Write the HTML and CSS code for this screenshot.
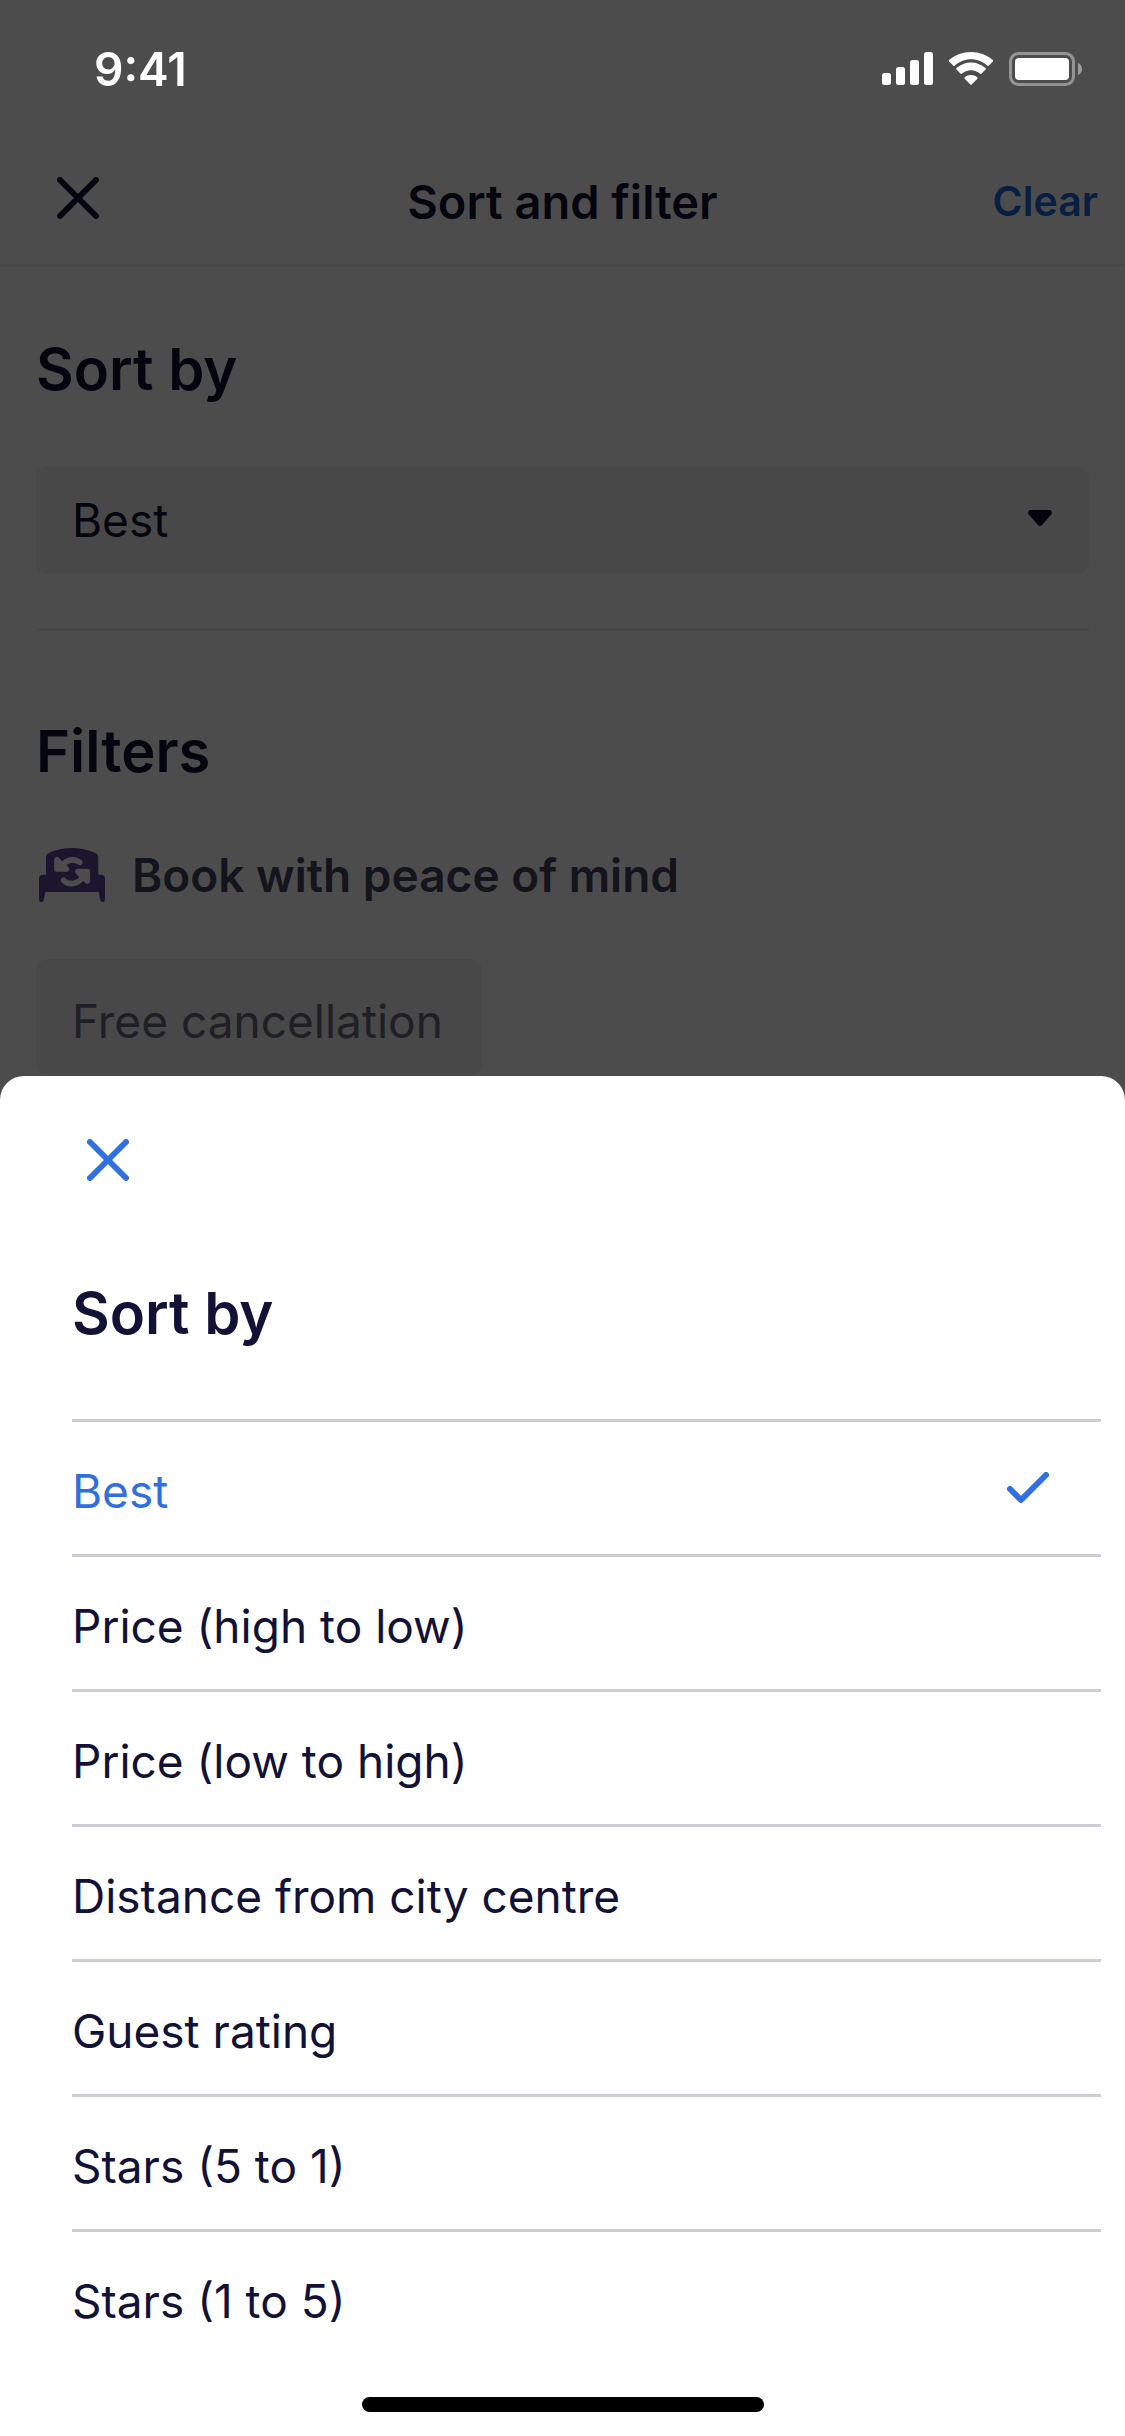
FILE: index.html
```html
<!DOCTYPE html>
<html lang="en">
<head>
    <meta charset="UTF-8">
    <meta name="viewport" content="width=device-width, initial-scale=1.0">
    <title>Sort and filter</title>
    <link rel="stylesheet" href="styles.css">
</head>
<body>
    <!-- Status bar -->
    <div class="status-bar">
        <span class="time">9:41</span>
        <div class="status-icons">
            <svg width="51" height="34" viewBox="0 0 51 34" fill="#fff">
                <rect x="0" y="21" width="9" height="12" rx="2.5"/>
                <rect x="14" y="15" width="9" height="18" rx="2.5"/>
                <rect x="28" y="8" width="9" height="25" rx="2.5"/>
                <rect x="42" y="0" width="9" height="33" rx="2.5"/>
            </svg>
            <svg width="46" height="34" viewBox="0 0 46 34" fill="#fff">
                <path d="M23 7.2c6.300 0 12 2.400 16.400 6.500.4.300.9.300 1.200 0l4.300-4.300c.3-.3.3-.9 0-1.300C32.700-2.700 13.300-2.700 1.100 8.100c-.4.400-.4 1 0 1.300l4.300 4.300c.3.300.8.300 1.200 0C11 9.600 16.700 7.200 23 7.200z"/>
                <path d="M23 18.200c3.400 0 6.600 1.300 9.100 3.600.4.300.9.300 1.200 0l4.300-4.400c.4-.4.3-.9 0-1.300-8.300-7.600-20.900-7.600-29.200 0-.3.400-.4.900 0 1.300l4.300 4.400c.3.300.8.300 1.200 0 2.500-2.300 5.700-3.600 9.100-3.600z"/>
                <path d="M29.400 26.700c.4-.4.400-1 0-1.300-3.700-3.100-9.100-3.100-12.800 0-.4.300-.4.900 0 1.300l5.800 5.900c.3.400.9.400 1.200 0z"/>
            </svg>
            <svg width="73" height="34" viewBox="0 0 73 34">
                <rect x="1.500" y="1.500" width="63" height="31" rx="8" fill="none" stroke="#fff" stroke-opacity=".4" stroke-width="3"/>
                <rect x="6" y="6" width="54" height="22" rx="4" fill="#fff"/>
                <path d="M69 11v12c2.500-1 4-3.300 4-6s-1.500-5-4-6z" fill="#fff" fill-opacity=".45"/>
            </svg>
        </div>
    </div>

    <header class="nav">
        <button type="button" class="icon-btn" aria-label="Close">
            <svg width="42" height="42" viewBox="0 0 42 42" fill="none" stroke="currentColor" stroke-width="6" stroke-linecap="round"><path d="M3 3l36 36M39 3L3 39"/></svg>
        </button>
        <h1 class="nav-title">Sort and filter</h1>
        <button type="button" class="clear-btn">Clear</button>
    </header>

    <main class="page">
        <section class="sort-section">
            <h2 class="heading"><label for="sort">Sort by</label></h2>
            <div class="select-wrap">
                <select class="select" id="sort">
                    <option selected>Best</option>
                    <option>Price (high to low)</option>
                    <option>Price (low to high)</option>
                    <option>Distance from city centre</option>
                    <option>Guest rating</option>
                    <option>Stars (5 to 1)</option>
                    <option>Stars (1 to 5)</option>
                </select>
                <svg class="caret" width="24" height="16" viewBox="0 0 24 16" fill="currentColor"><path d="M3 0h18c2.500 0 3.800 2.800 2.200 4.600L14 15c-1.100 1.300-2.900 1.300-4 0L.8 4.600C-.8 2.800.5 0 3 0z"/></svg>
            </div>
        </section>

        <section class="filter-section">
            <h2 class="heading">Filters</h2>
            <h3 class="subheading">
                <svg width="66" height="54" viewBox="57 54 198 162">
                    <path fill="#5c479c" d="M78 82q0-9 8-13 69-30 141 0 8 4 8 13v52h8q12 0 12 12v61q0 9-7 9t-8-9l-4-21H76l-4 21q-1 9-8 9t-7-9v-61q0-12 12-12h9z"/>
                    <path fill="none" stroke="#fff" stroke-width="17" stroke-linecap="round" d="M179 97c-14-11-36-11-51 8M131 151c14 15 42 13 56-8"/>
                    <path fill="#fff" stroke="#fff" stroke-width="17" stroke-linejoin="round" stroke-linecap="round" d="M111 90v27h28zM202 153v-28h-28z"/>
                </svg>
                Book with peace of mind
            </h3>
            <button type="button" class="chip">Free cancellation</button>
        </section>
    </main>

    <div class="overlay"></div>

    <!-- Bottom sheet -->
    <div class="sheet" role="dialog" aria-labelledby="sheetTitle">
        <button type="button" class="icon-btn close-btn" aria-label="Close">
            <svg width="42" height="42" viewBox="0 0 42 42" fill="none" stroke="currentColor" stroke-width="6" stroke-linecap="round"><path d="M3 3l36 36M39 3L3 39"/></svg>
        </button>
        <h2 class="heading sheet-title" id="sheetTitle">Sort by</h2>
        <form class="options">
            <label class="option">
                <input type="radio" name="sortby" value="best" checked>
                <span>Best</span>
                <svg class="check" width="42" height="32" viewBox="0 0 42 32" fill="none" stroke="currentColor" stroke-width="6" stroke-linecap="round" stroke-linejoin="round"><path d="M3 17l11 11L39 3"/></svg>
            </label>
            <label class="option"><input type="radio" name="sortby" value="price-desc"><span>Price (high to low)</span></label>
            <label class="option"><input type="radio" name="sortby" value="price-asc"><span>Price (low to high)</span></label>
            <label class="option"><input type="radio" name="sortby" value="distance"><span>Distance from city centre</span></label>
            <label class="option"><input type="radio" name="sortby" value="rating"><span>Guest rating</span></label>
            <label class="option"><input type="radio" name="sortby" value="stars-desc"><span>Stars (5 to 1)</span></label>
            <label class="option"><input type="radio" name="sortby" value="stars-asc"><span>Stars (1 to 5)</span></label>
        </form>
        <div class="home-area"><div class="home-bar"></div></div>
    </div>
</body>
</html>
```

FILE: styles.css
```css
* { box-sizing: border-box; }
body {
    margin: 0;
    min-height: 100vh;
    font-family: Inter, "Liberation Sans", sans-serif;
    font-size: 46px;
    line-height: 60px;
    color: #111236;
    background-color: #fff;
}
h1, h2, h3 { margin: 0; }
button, select {
    font: inherit;
    color: inherit;
    border: 0;
    background: none;
    cursor: pointer;
}
svg { display: block; flex: none; }

/* Status bar */
.status-bar {
    position: relative;
    z-index: 2;
    display: flex;
    justify-content: space-between;
    align-items: center;
    height: 132px;
    padding: 6px 43px 0 94px;
    color: #fff;
}
.time { font-weight: 600; }
.status-icons { display: flex; gap: 15px; }

/* Header */
.nav {
    display: grid;
    grid-template-columns: 1fr auto 1fr;
    align-items: center;
    height: 135px;
    padding: 0 27px;
    border-bottom: 3px solid #f1f1f4;
}
.icon-btn {
    display: flex;
    align-items: center;
    justify-content: center;
    width: 72px;
    height: 72px;
    margin-left: 15px;
    padding: 0;
}
.nav-title {
    padding-top: 8px;
    font-size: 47px;
    font-weight: 600;
}
.clear-btn {
    justify-self: end;
    padding: 6px 0 0;
    font-size: 41px;
    font-weight: 600;
    color: #1b67dc;
}

/* Page content */
.page { padding: 0 36px; }
.heading {
    font-size: 58px;
    font-weight: 600;
    line-height: 72px;
}
.sort-section {
    padding: 66px 0 54px;
    border-bottom: 3px solid #f1f1f4;
}
.select-wrap {
    position: relative;
    margin-top: 61px;
}
.select {
    display: block;
    width: 100%;
    height: 108px;
    padding: 0 36px;
    border-radius: 12px;
    background-color: #f0f0f1;
    appearance: none;
}
.caret {
    position: absolute;
    top: 44px;
    right: 37px;
    pointer-events: none;
}
.filter-section { padding-top: 84px; }
.subheading {
    display: flex;
    align-items: center;
    gap: 27px;
    margin: 58px 0 54px;
    padding-left: 3px;
    font-size: 46px;
    font-weight: 600;
    color: #444560;
}
.chip {
    height: 117px;
    padding: 6px 39px 0 36px;
    border-radius: 12px;
    color: #68697f;
    background-color: #f0f0f1;
}

.overlay {
    position: fixed;
    inset: 0;
    background-color: rgba(0, 0, 0, .7);
}

/* Bottom sheet */
.sheet {
    position: fixed;
    right: 0;
    bottom: 0;
    left: 0;
    padding-top: 48px;
    border-radius: 24px 24px 0 0;
    background-color: #fff;
}
.close-btn {
    margin-left: 72px;
    color: #2f6fde;
}
.sheet-title { margin: 81px 72px 70px; }
.options { margin: 0 24px 0 72px; }
.option {
    display: flex;
    align-items: center;
    justify-content: space-between;
    height: 135px;
    border-top: 3px solid #cdcdd7;
    cursor: pointer;
}
.option span { padding-top: 6px; }
.option input {
    position: absolute;
    opacity: 0;
}
.option:has(input:checked) { color: #2f6fde; }
.check { margin-right: 52px; }
.home-area {
    display: flex;
    justify-content: center;
    height: 72px;
    padding-top: 33px;
}
.home-bar {
    width: 402px;
    height: 15px;
    border-radius: 8px;
    background-color: #000;
}
```
